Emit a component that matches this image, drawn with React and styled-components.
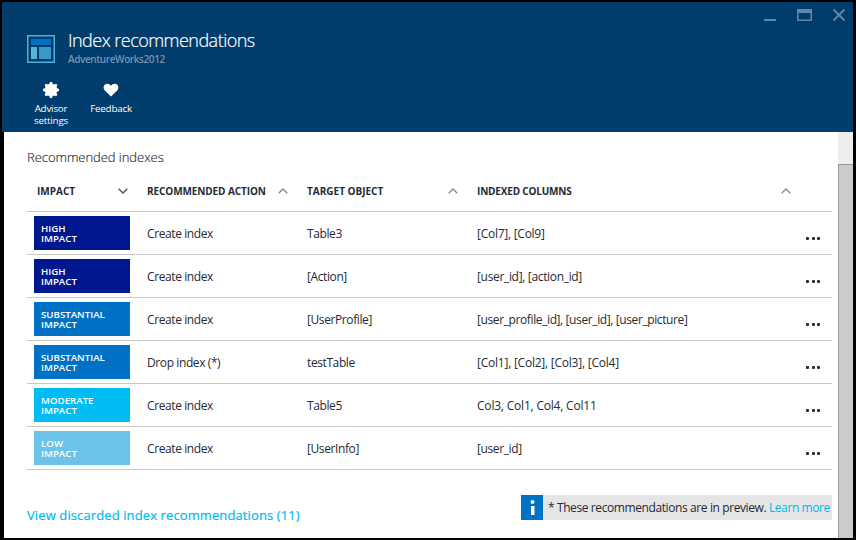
import React from "react";
import styled, { createGlobalStyle } from "styled-components";

const GlobalStyle = createGlobalStyle`
  *, *::before, *::after { box-sizing: border-box; }
  html, body { margin: 0; background: #000; overflow: hidden; }
  body { font-family: "Open Sans", "Noto Sans", sans-serif; }
`;

const Blade = styled.div`
  display: flex;
  flex-direction: column;
  width: 856px;
  height: 540px;
  padding: 2px 3px 2px 2px;
  background: #000;
  color: #252a33;
  font-size: 12px;
  white-space: nowrap;
`;

const Header = styled.header`
  display: grid;
  grid-template-columns: 1fr auto;
  grid-template-rows: 76px 54px;
  height: 130px;
  flex: none;
  background: #003c6c;
  color: #fff;
`;

const Heading = styled.div`
  display: flex;
  gap: 13px;
  padding: 33px 0 0 25px;
`;

const Titles = styled.div`
  margin-top: -8px;
`;

const Title = styled.h1`
  margin: 0;
  font-size: 18px;
  font-weight: 300;
  line-height: 26px;
  letter-spacing: -0.52px;
  -webkit-text-stroke: 0.2px #fff;
`;

const Subtitle = styled.div`
  margin-top: -1px;
  font-size: 10px;
  font-weight: 600;
  line-height: 14px;
  letter-spacing: -0.4px;
  color: #7394b2;
`;

const WindowControls = styled.div`
  display: flex;
  align-items: flex-start;
  padding: 6px 6px 0 0;
`;

const Commands = styled.nav`
  display: flex;
  padding: 4px 0 0 19px;
`;

const Command = styled.button`
  display: flex;
  flex-direction: column;
  align-items: center;
  width: 60px;
  padding: 0;
  border: 0;
  background: none;
  color: #fff;
  font: 400 9.8px/12px "Open Sans", "Noto Sans", sans-serif;
  letter-spacing: -0.2px;
  svg { margin-bottom: 5px; }
`;

const Body = styled.div`
  display: flex;
  flex: 1;
  margin-left: 2px;
  background: #fff;
`;

const Content = styled.main`
  width: 834px;
  padding: 16px 6px 0 23px;
`;

const SectionTitle = styled.h2`
  margin: 0;
  font-size: 13px;
  font-weight: 300;
  line-height: 18px;
  letter-spacing: -0.05px;
  -webkit-text-stroke: 0.15px #252a33;
`;

const Row = styled.div`
  display: grid;
  grid-template-columns: 120px 160px 170px 323px 32px;
  align-items: center;
  height: 43px;
  border-bottom: 1px solid #c8c8c8;
`;

const HeaderRow = styled(Row)`
  height: 41px;
  margin-top: 5px;
`;

const ColumnHeader = styled.div`
  display: flex;
  align-items: center;
  justify-content: space-between;
  padding: 0 ${(p) => p.$right}px 0 ${(p) => p.$left || 0}px;
  font-size: 10px;
  font-weight: 700;
  letter-spacing: ${(p) => p.$tracking || 0}px;
`;

const Badge = styled.div`
  width: 96px;
  height: 34px;
  margin-left: 7px;
  padding: 8px 0 0 7px;
  background: ${(p) => p.$color};
  color: #fff;
  font-size: 9.7px;
  font-weight: 600;
  line-height: 10px;
`;

const Cell = styled.div`
  padding-top: 1px;
  letter-spacing: ${(p) => p.$tracking}px;
`;

const More = styled.button`
  display: flex;
  gap: 2.6px;
  margin: 11px 0 0 6px;
  padding: 0;
  border: 0;
  background: none;
`;

const Dot = styled.span`
  width: 3px;
  height: 3px;
  border-radius: 1px;
  background: #252a33;
`;

const Footer = styled.footer`
  display: flex;
  justify-content: space-between;
  padding-top: 25px;
`;

const DiscardedLink = styled.a`
  margin-top: 11px;
  color: #00b9f1;
  font-size: 13px;
  line-height: 18px;
  letter-spacing: 0.11px;
  -webkit-text-stroke: 0.2px #00b9f1;
`;

const Notice = styled.div`
  display: flex;
  width: 311px;
  height: 25px;
  background: #e5e5e5;
  line-height: 26px;
  letter-spacing: -0.4px;
`;

const NoticeIcon = styled.div`
  display: flex;
  width: 22px;
  margin-right: 5px;
  background: #0072c6;
`;

const LearnMore = styled.a`
  color: #00b9f1;
`;

const Scrollbar = styled.div`
  width: 15px;
  padding-top: 32px;
  background: #eee;
`;

const Thumb = styled.div`
  height: 100%;
  border: solid #999;
  border-width: 1px 0 0 1px;
  background: #cbcbcb;
`;

const Chevron = ({ down }) => (
  <svg width="10" height="6" viewBox="0 0 10 6" fill="none" stroke={down ? "#4a4f57" : "#85888d"} strokeWidth="1.3">
    <path d={down ? "M.7.7 5 5 9.3.7" : "M.7 5.3 5 1 9.3 5.3"} />
  </svg>
);

const DashboardIcon = () => (
  <svg width="28" height="28" viewBox="0 0 28 28">
    <path d="M.75.75h26.5v26.5H.75z" fill="#003c6c" stroke="#50b0dc" strokeWidth="1.5" />
    <path d="M4 4h20v6H4z" fill="#0072c6" />
    <path d="M4 12h6v12H4z" fill="#59b4d9" />
    <path d="M12 12h12v12H12z" fill="#3999c6" />
  </svg>
);

const GearIcon = () => (
  <svg width="16" height="16" viewBox="0 0 16 16" fill="#fff">
    <circle cx="8" cy="8" r="6.2" />
    {[0, 45, 90, 135, 180, 225, 270, 315].map((a) => (
      <path key={a} d="M5.8 3 7 0h2l1.200 3z" transform={`rotate(${a} 8 8)`} />
    ))}
  </svg>
);

const HeartIcon = () => (
  <svg width="16" height="16" viewBox="0 0 16 16" fill="#fff">
    <path d="M8 14.5 2 8.8C.2 7 .2 4.200 1.700 2.700 3.500 1 6.500 1.300 8 3.800c1.500-2.500 4.500-2.800 6.300-1.100 1.500 1.500 1.500 4.300-.3 6.100z" />
  </svg>
);

const rows = [
  ["HIGH", "#00188f", "Create index", "Table3", "[Col7], [Col9]", -0.26],
  ["HIGH", "#00188f", "Create index", "[Action]", "[user_id], [action_id]", -0.33],
  ["SUBSTANTIAL", "#0072c6", "Create index", "[UserProfile]", "[user_profile_id], [user_id], [user_picture]", -0.39],
  ["SUBSTANTIAL", "#0072c6", "Drop index (*)", "testTable", "[Col1], [Col2], [Col3], [Col4]", -0.23],
  ["MODERATE", "#00bcf2", "Create index", "Table5", "Col3, Col1, Col4, Col11", -0.2],
  ["LOW", "#6dc2e9", "Create index", "[UserInfo]", "[user_id]", -0.38],
];

export default function App() {
  return (
    <>
      <GlobalStyle />
      <Blade>
        <Header>
          <Heading>
            <DashboardIcon />
            <Titles>
              <Title>Index recommendations</Title>
              <Subtitle>AdventureWorks2012</Subtitle>
            </Titles>
          </Heading>
          <WindowControls>
            <svg width="84" height="16" viewBox="0 0 84 16" fill="none" stroke="#6486a6">
              <path d="M1 12h12" strokeWidth="2" />
              <path d="M34.800 2.500h13.400v9.800H34.800z" strokeWidth="1.500" />
              <path d="M34 3h15" strokeWidth="4" />
              <path d="m70.500 1.500 11 11m0-11-11 11" strokeWidth="1.900" />
            </svg>
          </WindowControls>
          <Commands>
            <Command><GearIcon />Advisor<br />settings</Command>
            <Command><HeartIcon />Feedback</Command>
          </Commands>
        </Header>
        <Body>
          <Content>
            <SectionTitle>Recommended indexes</SectionTitle>
            <HeaderRow>
              <ColumnHeader $left={10} $right={19}>IMPACT<Chevron down /></ColumnHeader>
              <ColumnHeader $right={19.5} $tracking={-0.1}>RECOMMENDED ACTION<Chevron /></ColumnHeader>
              <ColumnHeader $right={19.5}>TARGET OBJECT<Chevron /></ColumnHeader>
              <ColumnHeader $right={9.5} $tracking={-0.18}>INDEXED COLUMNS<Chevron /></ColumnHeader>
            </HeaderRow>
            {rows.map(([impact, color, action, target, columns, tracking], i) => (
              <Row key={i}>
                <Badge $color={color}>{impact}<br />IMPACT</Badge>
                <Cell $tracking={-0.4}>{action}</Cell>
                <Cell $tracking={-0.4}>{target}</Cell>
                <Cell $tracking={tracking}>{columns}</Cell>
                <More aria-label="More"><Dot /><Dot /><Dot /></More>
              </Row>
            ))}
            <Footer>
              <DiscardedLink>View discarded index recommendations (11)</DiscardedLink>
              <Notice>
                <NoticeIcon>
                  <svg width="22" height="25" viewBox="0 0 22 25" fill="#fff">
                    <circle cx="11.500" cy="7" r="2" />
                    <path d="M10 11h3.500v9H10z" />
                  </svg>
                </NoticeIcon>
                <span>* These recommendations are in preview. <LearnMore>Learn more</LearnMore></span>
              </Notice>
            </Footer>
          </Content>
          <Scrollbar><Thumb /></Scrollbar>
        </Body>
      </Blade>
    </>
  );
}
